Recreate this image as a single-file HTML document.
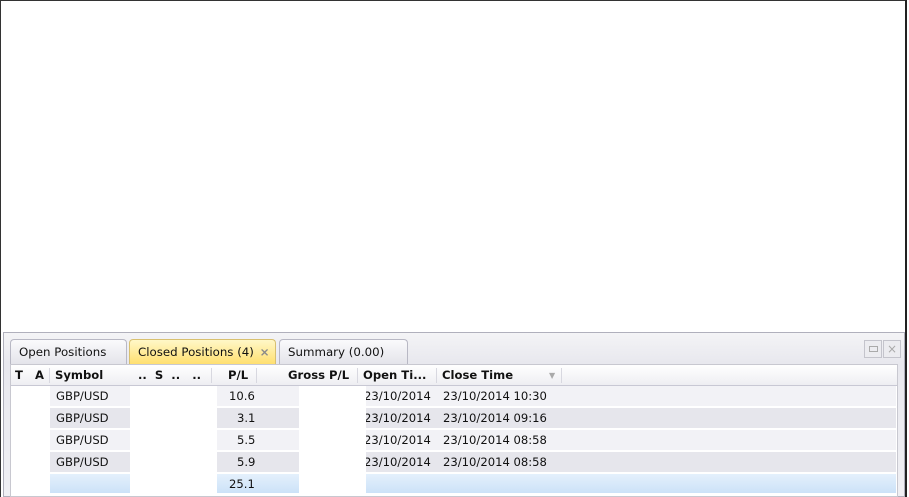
<!DOCTYPE html>
<html><head><style>
*{margin:0;padding:0;box-sizing:border-box}
body{width:909px;height:497px;background:#fff;position:relative;overflow:hidden;font-family:"DejaVu Sans","Liberation Sans",sans-serif;font-size:11.6px;color:#111}
.a{position:absolute;white-space:nowrap}
.tab{position:absolute;top:339px;height:25px;border:1px solid #b8b8c4;border-bottom:none;border-radius:4px 4px 0 0;background:linear-gradient(#fafafc,#e4e4ea);padding:5px 0 0 8px;font-size:11.8px}
.row{position:absolute;left:12px;width:884px;height:21px;border-bottom:1px solid #fff}
.c{position:absolute;top:3px}
.w{position:absolute;background:#fff}
.h{position:absolute;top:368px;font-weight:bold}
</style></head><body>
<div class="a" style="left:0;top:0;width:1px;height:497px;background:#333"></div>
<div class="a" style="left:0;top:0;width:907px;height:1px;background:#333"></div>
<div class="a" style="left:905px;top:0;width:2px;height:497px;background:#222"></div>
<div class="a" style="left:3px;top:332px;width:902px;height:165px;background:linear-gradient(#f4f4f6,#e8e8ee 30px,#f0f0f4);border:1px solid #b0b0bc"></div>
<div class="tab" style="left:10px;width:117px">Open Positions</div>
<div class="tab" style="left:129px;width:147px;background:linear-gradient(#fff8c8,#ffe070);border-color:#d8c070">Closed Positions (4) <span style="color:#8a8a8a;font-weight:bold;margin-left:2px">×</span></div>
<div class="tab" style="left:279px;width:129px">Summary (0.00)</div>
<div class="a" style="left:864px;top:340px;width:18px;height:18px;border:1px solid #c4c4cc;background:#ececf0"><div style="position:absolute;left:4px;top:5px;width:9px;height:6px;border:1px solid #aaa"></div></div>
<div class="a" style="left:883px;top:340px;width:18px;height:18px;border:1px solid #c4c4cc;background:#ececf0;color:#aaa;font-size:12px;text-align:center;line-height:16px">×</div>
<div class="a" style="left:10px;top:364px;width:888px;height:133px;background:#fff;border:1px solid #c8c8d0"></div>
<div class="a" style="left:11px;top:365px;width:886px;height:21px;background:linear-gradient(#fff,#eeeef2);border-bottom:1px solid #c8c8d4"></div>
<div class="h" style="left:15px">T</div><div class="h" style="left:35px">A</div>
<div class="h" style="left:55px">Symbol</div>
<div class="h" style="left:138px">..&nbsp; S &nbsp;..&nbsp;&nbsp; ..</div>
<div class="h" style="left:228px">P/L</div>
<div class="h" style="left:288px">Gross P/L</div>
<div class="h" style="left:363px">Open Ti...</div>
<div class="h" style="left:442px">Close Time</div>
<div class="a" style="left:549px;top:371px;color:#aaa;font-size:8px">▼</div>
<div class="a" style="left:561px;top:368px;width:1px;height:15px;background:#d8d8e0"></div>
<div class="a" style="left:49px;top:368px;width:1px;height:15px;background:#d8d8e0"></div>
<div class="a" style="left:211px;top:368px;width:1px;height:15px;background:#d8d8e0"></div>
<div class="a" style="left:256px;top:368px;width:1px;height:15px;background:#d8d8e0"></div>
<div class="a" style="left:357px;top:368px;width:1px;height:15px;background:#d8d8e0"></div>
<div class="a" style="left:436px;top:368px;width:1px;height:15px;background:#d8d8e0"></div>

<div class="row" style="top:386px;background:#f2f2f6"><span class="c" style="left:44px">GBP/USD</span><span class="c" style="left:217px">10.6</span><span class="c" style="left:352px">23/10/2014</span><span class="c" style="left:431px">23/10/2014 10:30</span></div>
<div class="row" style="top:408px;background:#e6e6ec"><span class="c" style="left:44px">GBP/USD</span><span class="c" style="left:225px">3.1</span><span class="c" style="left:352px">23/10/2014</span><span class="c" style="left:431px">23/10/2014 09:16</span></div>
<div class="row" style="top:430px;background:#f2f2f6"><span class="c" style="left:44px">GBP/USD</span><span class="c" style="left:225px">5.5</span><span class="c" style="left:352px">23/10/2014</span><span class="c" style="left:431px">23/10/2014 08:58</span></div>
<div class="row" style="top:452px;background:#e6e6ec"><span class="c" style="left:44px">GBP/USD</span><span class="c" style="left:225px">5.9</span><span class="c" style="left:352px">23/10/2014</span><span class="c" style="left:431px">23/10/2014 08:58</span></div>
<div class="row" style="top:474px;height:20px;background:linear-gradient(#e4f0fc,#cce2f8)"><span class="c" style="left:217px">25.1</span></div>
<div class="w" style="left:12px;top:386px;width:38px;height:108px"></div>
<div class="w" style="left:130px;top:386px;width:87px;height:108px"></div>
<div class="w" style="left:299px;top:386px;width:67px;height:108px"></div>
</body></html>
